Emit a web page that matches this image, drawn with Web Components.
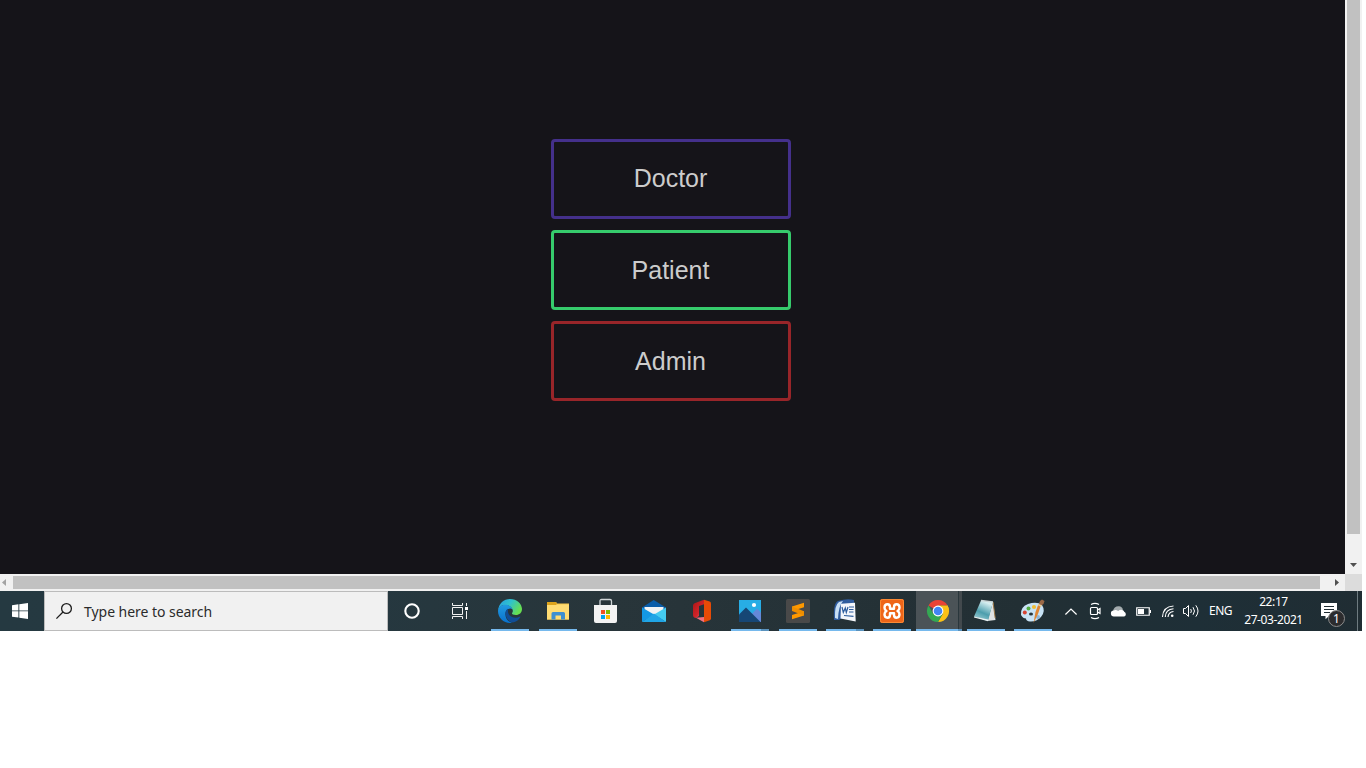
<!DOCTYPE html>
<html lang="en">
<head>
<meta charset="utf-8">
<title>Login</title>
<style>
html, body { margin: 0; background: #fff; overflow: hidden; }
</style>
</head>
<body>
<desktop-screen>
  <browser-view>
    <role-button style="--edge:#44308b;--lh:72px">Doctor</role-button>
    <role-button style="--edge:#36cb6c">Patient</role-button>
    <role-button style="--edge:#982529">Admin</role-button>
  </browser-view>
  <task-bar></task-bar>
</desktop-screen>
<script>
const define = (name, html) => customElements.define(name, class extends HTMLElement {
  constructor() {
    super();
    const t = document.createElement('template');
    t.innerHTML = html;
    this.attachShadow({ mode: 'open' }).append(t.content.cloneNode(true));
  }
});

define('desktop-screen', `<style>
:host { display: flex; flex-direction: column; width: 1362px; height: 631px; }
</style><slot></slot>`);

define('role-button', `<style>
:host { display: block; }
button { display: flex; justify-content: center; align-items: flex-start; box-sizing: border-box; width: 240px; height: 80px; padding: 0 1px 0 0; border: 3px solid var(--edge); border-radius: 4px; background: transparent; color: #ccc; font: 25px "Liberation Sans", Arial, sans-serif; line-height: var(--lh, 74px); }
</style><button><slot></slot></button>`);

define('browser-view', `<style>
:host { display: grid; grid-template: 574px 17px / 1345px 17px; }
main { background: #151419; display: flex; flex-direction: column; align-items: center; gap: 11px; padding: 139px 3px 0 0; }
.v, .h { background: #f1f1f1; display: flex; }
.v { flex-direction: column; align-items: center; }
.h { align-items: center; }
.v i { width: 13px; height: 534px; background: #c1c1c1; }
.h i { width: 1307px; height: 13px; background: #c1c1c1; }
.c { background: #dcdcdc; }
svg { display: block; }
.v svg { margin-top: 22px; }
</style>
<main><slot></slot></main>
<div class="v"><i></i><svg width="17" height="17" viewBox="0 0 17 17"><path d="M5 7h7L8.500 11z" fill="#505050"/></svg></div>
<div class="h"><svg width="13" height="17" viewBox="0 0 13 17"><path d="M6 5v7L2 8.500z" fill="#a3a3a3"/></svg><i></i><svg width="25" height="17" viewBox="0 0 25 17"><path d="M15 5v7l4-3.500z" fill="#505050"/></svg></div>
<div class="c"></div>`);

define('task-app', `<style>
:host { display: grid; width: 48px; height: 40px; box-sizing: border-box; place-items: center; grid-template-rows: 40px; position: relative; }
b { display: none; position: absolute; bottom: 0; left: 5px; width: 38px; height: 2px; background: #76b9ed; }
:host([open]) b { display: block; }
:host([multi]) b { background: linear-gradient(90deg, #76b9ed 30px, #5a92bd 30px); }
:host([active]) { background: linear-gradient(90deg, #4b5357 42px, #2a373c 42px, #2a373c 43px, #42494d 43px); }
:host([active]) b { left: 0; width: 46px; background: linear-gradient(90deg, #76b9ed 42px, #5a92bd 42px); }
</style><slot></slot><b></b>`);

define('task-bar', `<style>
:host { display: flex; height: 40px; color: #fff; font-family: "Noto Sans", "Open Sans", sans-serif; background: linear-gradient(90deg, #253941, #253840 25%, #28353a 45%, #222f34 75%, #1e2f37 88%, #202d33); }
svg { display: block; overflow: visible; }
.start { width: 44px; display: grid; place-items: center; box-sizing: border-box; padding-right: 4px; }
.search { width: 344px; box-sizing: border-box; border: 1px solid #bcbcbc; background: #f1f1f1; color: #2b2b2b; display: flex; align-items: center; padding-left: 11px; }
.search span { margin-left: 12px; font-size: 14px; letter-spacing: -0.04px; white-space: nowrap; }
.t { width: 24px; display: grid; place-items: center; }
.eng { width: 35px; margin-right: 1px; font-size: 12px; line-height: 40px; text-align: center; letter-spacing: -.5px; }
.clock { width: 69px; font-size: 12px; line-height: 18px; padding-top: 2px; box-sizing: border-box; text-align: center; letter-spacing: -.4px; white-space: nowrap; }
.note { width: 49px; display: grid; place-items: center; position: relative; }
.end { width: 1px; background: #6e7b80; }
.badge { position: absolute; left: 20px; top: 19px; width: 15px; height: 15px; border: 1px solid #8c8c8c; border-radius: 50%; background: #2c2c2e; font-size: 12px; line-height: 15px; text-align: center; }
</style>
<div class="start"><svg width="16" height="16" viewBox="0 0 16 16" fill="#fff"><path d="M0 2.200 6.400 1.300v6.100H0zM7.300 1.200 16 0v7.400H7.300zM0 8.300h6.400v6.200L0 13.700zM7.300 8.300H16V16l-8.700-1.300z"/></svg></div>
<div class="search"><svg width="16" height="16" viewBox="0 0 16 16" fill="none" stroke="#1d1d1d" stroke-width="1.300"><circle cx="10.500" cy="5.500" r="4.900"/><path d="M7 9 .4 15.600"/></svg><span>Type here to search</span></div>
<task-app><svg width="16" height="16" viewBox="0 0 16 16"><circle cx="8" cy="8" r="6.700" fill="none" stroke="#fff" stroke-width="2.100"/></svg></task-app>
<task-app style="margin-right:2px"><svg width="16" height="16" viewBox="0 0 16 16" fill="none" stroke="#f2f2f2"><path d="M.5 0v2.500h10V0M.5 16v-2.500h10V16M.5 4.500h10v7H.5zM14.500 0v3M14.500 8v8"/><path d="M13 4h3v3h-3z" fill="#fff" stroke="none"/></svg></task-app>
<task-app open><svg width="24" height="24" viewBox="0 0 24 24"><defs><linearGradient id="eg" x1="0" y1="0" x2="1" y2=".5"><stop stop-color="#289be0"/><stop offset=".5" stop-color="#2fc2cd"/><stop offset="1" stop-color="#67df50"/></linearGradient><linearGradient id="eb" x1="0" y1="0" x2="0" y2="1"><stop stop-color="#229be0"/><stop offset="1" stop-color="#0870cc"/></linearGradient></defs>
<path d="M.2 11C.8 4.500 5.800 0 12 0c6.800 0 12 4.800 12 10.100 0 3.700-2.700 6-6.100 6-3 0-4.400-1.200-3.800-2.200 1-1.200.9-2.700.2-4C12.800 7.400 9.800 6.100 6.800 6.100 3.800 6.100 1.300 7.900.2 11z" fill="url(#eg)"/>
<path d="M0 12C.2 8 3.400 5.800 7 5.800c3.600 0 6.700 1.800 7.500 4.600-2.600-2.100-7.100.1-7.100 4.800 0 4.600 3.500 8.400 7.600 8.400C7 25.500 0 19.500 0 12z" fill="url(#eb)"/>
<path d="M10 9.800c-2.200 1.200-3 3.600-2.400 6 1 4.500 4.500 7.900 8.300 7.500 2.700-.7 4.900-2.600 6.300-5 .3-.6-.1-.9-.6-.6-4.800 2.500-10.600.4-11.500-4.100-.3-1.500 0-2.700-.1-3.800z" fill="#104d96"/></svg></task-app>
<task-app open><svg width="22" height="20" viewBox="0 0 22 20"><path d="M0 1h9l1 1.500h12v16H0z" fill="#f8c84c"/><path d="M0 3.500h22v15H0z" fill="#ffdc73"/><path d="M0 1h9l1 1.800L9 4H0z" fill="#dda31b"/><path d="M4.500 18.500V12.500q0-1.500 1.500-1.500h10.500q1.500 0 1.500 1.500v6h-4v-4H8.500v4z" fill="#3d8fd1"/></svg></task-app>
<task-app><svg width="24" height="24" viewBox="0 0 24 24"><path d="M6 7V2q0-1.500 1.500-1.500h8.500q1.500 0 1.500 1.500v5" fill="none" stroke="#cfd5d7" stroke-width="1.300"/><path d="M0 6h23v16q0 2-2 2H2q-2 0-2-2z" fill="#f3f3f3"/><path d="M7 11h4v4H7z" fill="#f25022"/><path d="M12 11h4v4h-4z" fill="#7fba00"/><path d="M7 16h4v4H7z" fill="#00a4ef"/><path d="M12 16h4v4h-4z" fill="#ffb900"/></svg></task-app>
<task-app><svg width="24" height="24" viewBox="0 0 24 24"><path d="M0 8.500 11.700 1 24 8.500v3H0z" fill="#0a5da9"/><path d="M2.500 8h19v9h-19z" fill="#f1f3f4"/><path d="M0 8.500 12 15.500 0 23z" fill="#1498e3"/><path d="M24 8.500V23L12 15.500z" fill="#45cbef"/><path d="M0 23 12 14.500 24 23z" fill="#20a5e6"/></svg></task-app>
<task-app><svg width="20" height="24" viewBox="0 0 20 24"><defs><linearGradient id="of" x2="1" y2="1"><stop stop-color="#a71615"/><stop offset=".6" stop-color="#d1242a"/><stop offset="1" stop-color="#f36f7c"/></linearGradient></defs><path d="M1 6.500Q1 5 2.500 4.300L12 .8v4.400L7 7v10l-3 2Q1 18.500 1 16z" fill="url(#of)"/><path d="M4 18.800 12 18v5.200z" fill="#f3707f"/><path d="m12 .8 5.700 1.800q1.300.5 1.300 1.800v15.200q0 1.300-1.200 1.700L12 23.200z" fill="#e74b06"/></svg></task-app>
<task-app open multi><svg width="22" height="22" viewBox="0 0 22 22"><path d="M0 0h22v22H0z" fill="#28ade5"/><path d="m12 15 6-6.500 4 4V22h-6z" fill="#6488d8"/><path d="m0 14.500 7-7L21.500 22H0z" fill="#164675"/><circle cx="15" cy="5" r="2.100" fill="#fff"/></svg></task-app>
<task-app open><svg width="24" height="24" viewBox="0 0 24 24"><rect width="24" height="24" rx="1.500" fill="#494949"/><path d="M6 7.500 18 3.800v4.400l-12 3.700z" fill="#ff9800"/><path d="M6 15.900 18 12.200v4.400L6 20.300z" fill="#ff9800"/><path d="m6 7.500 12 4.700v4.400L6 11.900z" fill="#f08e00"/></svg></task-app>
<task-app open multi style="width:46px;left:-1px"><svg width="24" height="24" viewBox="0 0 24 24" style="margin-left:1px"><path d="M1 21Q0 4 5 2q9-3 16-1v10L6 21z" fill="#305c9e"/><path d="M2 19Q1.500 6 6 3l4-1Q5.500 7 5 20z" fill="#c8dff5"/><path d="m8 4.800 14-1 .7 18.700L7.500 19.500z" fill="#f5f7fb"/><path d="m9 8 1.300 5.500 2-4.500 1 4.500L15 8M16 8h5M16 10.500h4.500M16 13h4.500M11 16.500l9.500.8" fill="none" stroke="#2d5d9e" stroke-width="1.200"/></svg></task-app>
<task-app open><svg width="24" height="24" viewBox="0 0 24 24"><rect width="24" height="24" rx="2" fill="#ee6519"/><rect x=".5" y=".5" width="23" height="23" rx="2" fill="none" stroke="#fb8a35"/><path d="M10 9.800V8.300Q10 5.300 7.500 5.300 4.500 5.300 4.500 8.700 4.500 11 6.500 12 4.500 13 4.500 15.300 4.500 18.700 7.500 18.700 10 18.700 10 15.700V14.200H14V15.700Q14 18.700 16.500 18.700 19.500 18.700 19.500 15.300 19.500 13 17.500 12 19.500 11 19.500 8.700 19.500 5.300 16.500 5.300 14 5.300 14 8.300V9.800Z" fill="none" stroke="#fff" stroke-width="2.400" stroke-linejoin="round"/></svg></task-app>
<task-app open active style="width:46px"><svg width="22" height="22" viewBox="0 0 22 22" style="margin-right:3px"><path d="M11 11 1.470 5.500A11 11 0 0 1 20.530 5.500H11z" fill="#ea4335"/><path d="M11 11 20.530 5.500A11 11 0 0 1 11 22L15.760 13.750z" fill="#fbc116"/><path d="M11 11 15.760 13.750 11 22A11 11 0 0 1 1.470 5.500L6.240 13.750z" fill="#34a853"/><path d="M11 5.500h9.530A11 11 0 0 1 22 11h-6z" fill="#fbc116"/><circle cx="11" cy="11" r="5.400" fill="#fff"/><circle cx="11" cy="11" r="4.300" fill="#4285f4"/></svg></task-app>
<task-app open><svg width="24" height="24" viewBox="0 0 24 24" style="margin-right:2px"><defs><linearGradient id="np" x2="0" y2="1" x1=".4"><stop stop-color="#d6eef0"/><stop offset=".5" stop-color="#4c9ead"/><stop offset="1" stop-color="#b4dbe0"/></linearGradient></defs><path d="m20 3 2.500 18-8 1z" fill="#dfe2e3"/><path d="m20 3 2.200 16" stroke="#9a7645"/><path d="M8 1.500 20 3l-5 19L1 17.500z" fill="url(#np)"/><path d="m1 17.500 14 3v1.800L1 18.500z" fill="#ecf3f4"/><path d="m8 1.500 12 1.500" stroke="#cbd5d6" stroke-width="1.500"/></svg></task-app>
<task-app open style="width:47px;left:-1px"><svg width="26" height="24" viewBox="0 0 26 24"><path d="M1 16Q0 8 8 5q9-3 14 1 4 6-1 12-5 5-11 4.500-4-.5-4-3-3 0-5-3.500z" fill="#c8e2f5"/><ellipse cx="11" cy="15" rx="2" ry="1.500" fill="#28353a"/><circle cx="4.800" cy="13.500" r="2" fill="#d74333"/><circle cx="8.500" cy="9.500" r="2" fill="#53ad41"/><circle cx="14" cy="8" r="2.100" fill="#f1bd35"/><circle cx="18" cy="18" r="2" fill="#8eb6d7"/><path d="m13.500 24 2-11 3-8 2.500 1-3 9z" fill="#df8533"/><path d="m18.500 6 1.500-4 2-1.500L24.500 2l-1 3-3 2z" fill="#9b6846"/><path d="m18 5.500 3.500 1.500" stroke="#e6cf9b" stroke-width="1.500"/></svg></task-app>
<div class="t" style="margin-left:2px"><svg width="12" height="7" viewBox="0 0 12 7"><path d="M.4 6.500 6 1l5.600 5.500" fill="none" stroke="#fff" stroke-width="1.200"/></svg></div>
<div class="t"><svg width="12" height="16" viewBox="0 0 12 16" fill="none" stroke="#fff" stroke-width="1.200"><rect x="1.500" y="4.500" width="7" height="7" rx="1"/><path d="m8.500 7 2.500-1.500v5L8.500 9M2 1.500Q6-.7 10 1.500M2 14.500q4 2.200 8 0"/></svg></div>
<div class="t"><svg width="16" height="11" viewBox="0 0 16 11"><path d="M2 5Q3 0 8 .3q3 .2 4 3.200L6 8H2z" fill="#a3abae"/><path d="M3 10.500a3 3 0 0 1-.2-6q2-1 4.400.6Q9.500 3 12 4.200q1 .7 1.200 1.600a2.500 2.500 0 0 1 0 4.700z" fill="#fff"/></svg></div>
<div class="t"><svg width="15" height="9" viewBox="0 0 15 9"><path d="M.75.75h12.500v7.500H.75z" fill="none" stroke="#fff" stroke-width="1.200"/><path d="M2 2h6v5H2zM14 3h1v3h-1z" fill="#fff"/></svg></div>
<div class="t"><svg width="12" height="12" viewBox="0 0 12 12" fill="none" stroke="#fff"><g transform="translate(1 .5)"><path d="M.5 11.500Q1 1 11.500.5M3.300 11.500Q3.500 4 11.500 3.300M6 11.500Q6.500 6.500 11.500 6" stroke-width="1.100"/><circle cx="10.200" cy="10.200" r="1.300" fill="#fff" stroke="none"/></g></svg></div>
<div class="t"><svg width="16" height="14" viewBox="0 0 16 14" fill="none" stroke="#fff"><path d="M.5 4.500h2l3-3v11l-3-3h-2zM7.700 5q1.400 2 0 4M10 3.200q3 3.800 0 7.600M12.800 1.300q4.400 5.700 0 11.400"/></svg></div>
<div class="eng">ENG</div>
<div class="clock">22:17<br>27-03-2021</div>
<div class="note"><svg width="16" height="16" viewBox="0 0 16 16" style="margin-right:8px"><path d="M0 0h16v13H8l-3.500 3.300V13H0z" fill="#fff"/><path d="M3 3.500h10M3 6.500h10M3 9.500h6" stroke="#202d33"/></svg><span class="badge">1</span></div>
<div class="end"></div>`);
</script>
</body>
</html>
